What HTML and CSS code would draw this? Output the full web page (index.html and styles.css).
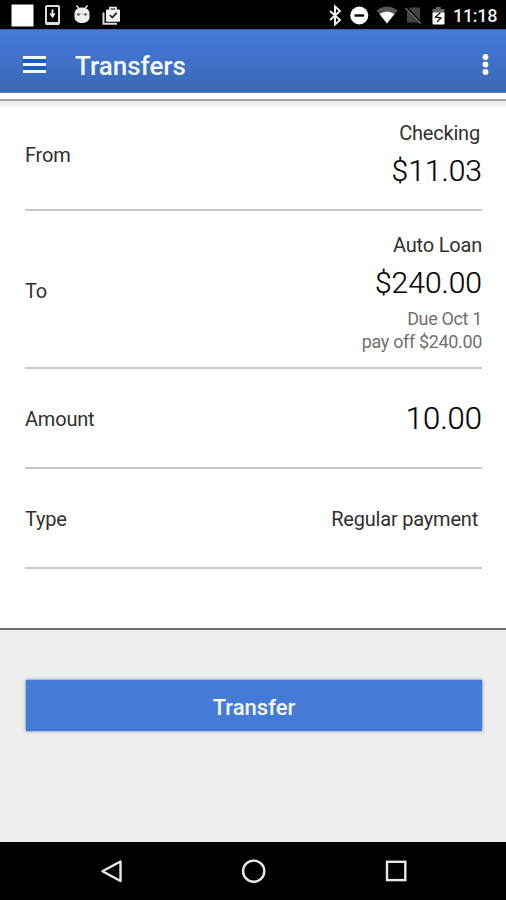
FILE: index.html
```html
<!DOCTYPE html>
<html lang="en">
<head>
<meta charset="utf-8">
<title>Transfers</title>
<link rel="stylesheet" href="styles.css">
</head>
<body>
<div class="screen">
  <div class="status">
    <svg class="status-icons" width="130" height="29" viewBox="0 0 130 29">
      <rect x="11.500" y="4.500" width="22" height="22" fill="#fff"/>
      <rect x="46" y="6" width="13" height="18" rx="1" fill="none" stroke="#ddd" stroke-width="2"/>
      <path d="M46 23.500h13" stroke="#ddd" stroke-width="3"/>
      <path d="M52.500 9.500v5" stroke="#fff" stroke-width="1.800"/>
      <path d="M49.300 13.500h6.400l-3.200 4.500z" fill="#fff"/>
      <path d="M76.500 5.500l2.500 3M87.500 5.500l-2.500 3" stroke="#eee" stroke-width="1.400"/>
      <path d="M74.500 13.500c0-8 15-8 15 0v3.500c0 8-15 8-15 0z" fill="#eee"/>
      <path d="M74.500 14h15" stroke="#aaa" stroke-width=".7"/>
      <circle cx="78.500" cy="14.500" r="1.200" fill="#555"/><circle cx="85.500" cy="14.500" r="1.200" fill="#555"/>
      <path d="M103.500 12.500v11.300h13.500" fill="none" stroke="#ddd" stroke-width="2"/>
      <rect x="106" y="9.500" width="14" height="12.300" rx="1" fill="#f2f2f2"/>
      <path d="M110 10V7.700h6V10" fill="none" stroke="#eee" stroke-width="1.700"/>
      <path d="M109.800 15l2.500 2.600 4.400-5" fill="none" stroke="#222" stroke-width="1.700"/>
    </svg>
    <svg class="status-icons" width="126" height="29" viewBox="326 0 126 29">
      <path d="M330 11l10 9-5 4.500v-18l5 4.500-10 9" fill="none" stroke="#eee" stroke-width="2"/>
      <circle cx="359.300" cy="15.500" r="9" fill="#fff"/>
      <path d="M354.500 15.500h9.600" stroke="#000" stroke-width="2.400"/>
      <path d="M376.500 10.500q10.500-8 21 0L387 23.500z" fill="#555"/>
      <path d="M379.500 14q7.500-5 15 0L387 23.500z" fill="#fff"/>
      <path d="M410 7.500h10v15h-13v-12z" fill="#444"/>
      <path d="M406 7.500l15 16" stroke="#000" stroke-width="3"/>
      <path d="M405.500 8l15 15.500" stroke="#777" stroke-width="1.300"/>
      <path d="M432.500 13V9h3.300V7h5v2h3.700v4z" fill="#666"/>
      <rect x="432.500" y="12.500" width="12" height="12" rx="1" fill="#fff"/>
      <path d="M440.500 12.500l-5 4.500 5.500 1-4 4" fill="none" stroke="#111" stroke-width="1.300"/>
    </svg>
    <span class="clock">11:18</span>
  </div>
  <header class="bar">
    <svg class="menu" width="24" height="20" viewBox="0 0 24 20">
      <path d="M0 1h23v17H0z" fill="#1a5dbb"/>
      <path d="M0 2.500h23M0 9.500h23M0 16.500h23" stroke="#eafaff" stroke-width="2.800"/>
    </svg>
    <h1 class="title">Transfers</h1>
    <svg class="more" width="8" height="22" viewBox="0 0 8 22" fill="#fff">
      <circle cx="3.500" cy="3" r="2.900"/><circle cx="3.500" cy="10.500" r="2.900"/><circle cx="3.500" cy="18" r="2.900"/>
    </svg>
  </header>
  <main class="panel">
    <section class="row row-from">
      <span class="label from">From</span>
      <div class="values"><span class="name checking">Checking</span><span class="money">$11.03</span></div>
    </section>
    <section class="row row-to">
      <span class="label">To</span>
      <div class="values"><span class="name">Auto Loan</span><span class="money">$240.00</span><span class="note">Due Oct 1</span><span class="note">pay off $240.00</span></div>
    </section>
    <section class="row row-amount">
      <span class="label">Amount</span>
      <span class="money amount">10.00</span>
    </section>
    <section class="row row-type">
      <span class="label">Type</span>
      <span class="label type">Regular payment</span>
    </section>
  </main>
  <div class="actions"><button class="transfer">Transfer</button></div>
  <nav class="nav">
    <svg width="506" height="58" viewBox="0 842 506 58" fill="none" stroke="#e8e8e8" stroke-width="2.400">
      <path d="M120.500 861.500v19.500l-18-9.750z" stroke-linejoin="round"/>
      <circle cx="253.700" cy="871.200" r="10.600"/>
      <rect x="387" y="861.800" width="18.300" height="18.300"/>
    </svg>
  </nav>
</div>
</body>
</html>
```
FILE: styles.css
```css
* { box-sizing: border-box; }
body { margin: 0; font-family: Roboto, sans-serif; color: #303030; }
.screen { width: 506px; height: 900px; display: flex; flex-direction: column; background: #ededed; overflow: hidden; }
.status { height: 29px; background: #000; display: flex; justify-content: space-between; flex: none; }
.status-icons { display: block; flex: none; }
.status-icons:first-child { margin-right: auto; }
.clock { width: 54px; padding-left: 1px; color: #eee; font-size: 18px; font-weight: 500; line-height: 31px; letter-spacing: -.3px; white-space: nowrap; }
.bar { height: 64px; flex: none; display: flex; align-items: center; padding: 7px 16px 0 23px; background: linear-gradient(#447adb, #3a68b5); border-top: 1px solid #3565b4; border-bottom: 1px solid #5a80c4; }
.menu { flex: none; }
.title { margin: 2px auto 0 28px; font-size: 26px; line-height: 32px; font-weight: 500; color: #f2faff; }
.more { flex: none; }
.panel { height: 537px; flex: none; padding: 8px 24px 0 25px; background: linear-gradient(#fff 6px, #a3a3a3 6px, #a3a3a3 8px, #e6e6e6 8px, #fff 16px); border-bottom: 2px solid #6e6e6e; }
.row { display: flex; justify-content: space-between; align-items: center; border-bottom: 2px solid #c8c8c8; }
.row-from { height: 110px; }
.row-to { height: 158px; padding-top: 3px; }
.row-amount, .row-type { height: 100px; padding-top: 2px; }
.label, .name { font-size: 20px; line-height: 24px; letter-spacing: -.2px; }
.values { display: flex; flex-direction: column; align-items: flex-end; }
.row-to .values { padding-top: 4px; }
.money { font-size: 30px; line-height: 36px; font-weight: 300; color: #000; -webkit-text-stroke: .2px #000; }
.amount { font-size: 31px; }
.name { margin-bottom: 8px; }
.checking { margin-right: 2px; }
.row-to .money { margin-bottom: 6px; }
.note { font-size: 18px; line-height: 23px; letter-spacing: -.35px; font-weight: 400; color: #707070; }
.type { margin-right: 4px; }
.actions { height: 212px; flex: none; padding: 50px 24px 0 26px; }
.transfer { display: block; width: 100%; height: 51px; border: 0; padding: 4px 0 0; background: #457ad6; box-shadow: 0 0 3px #546f9d; color: #f0faff; font: 500 22px/26px Roboto, sans-serif; }
.nav { height: 58px; background: #000; flex: none; }
.nav svg { display: block; }
```
